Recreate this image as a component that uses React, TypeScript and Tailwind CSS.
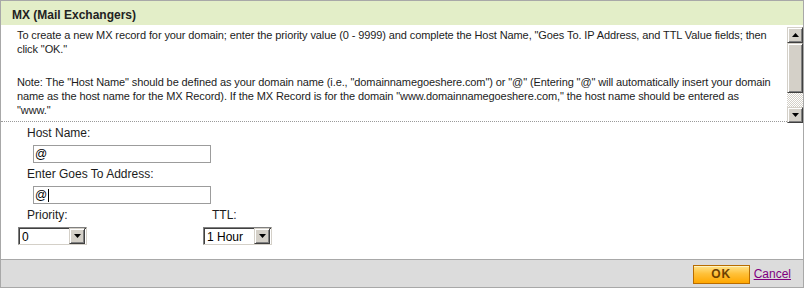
import React from "react";

const Triangle = () => (
  <svg width="7" height="4" viewBox="0 0 7 4">
    <polygon points="0,0 7,0 3.5,4" fill="#000" />
  </svg>
);

const TriangleUp = () => (
  <svg width="7" height="4" viewBox="0 0 7 4">
    <polygon points="0,4 7,4 3.5,0" fill="#000" />
  </svg>
);

// classic raised 3d button look
const raised =
  "bg-[#d4d0c8] border border-t-[#d4d0c8] border-l-[#d4d0c8] border-r-[#404040] border-b-[#404040] shadow-[inset_1px_1px_0_#fff,inset_-1px_-1px_0_#808080]";

const SelectBox = ({ value }: { value: string }) => (
  <div className="flex h-[18px] w-[69px] items-center border border-t-[#808080] border-l-[#808080] border-r-[#d4d0c8] border-b-[#d4d0c8] bg-white shadow-[inset_1px_1px_0_#404040]">
    <span className="flex-1 pl-[3px] pt-[1px] text-[12px] leading-[14px] text-black">{value}</span>
    <div className={`${raised} mr-[1px] flex h-[16px] w-[16px] items-center justify-center`}>
      <Triangle />
    </div>
  </div>
);

const App = () => {
  return (
    <div className="h-[289px] w-[808px] bg-white font-['Liberation_Sans',Arial,sans-serif]">
      <div className="flex h-[288px] w-[804px] flex-col border border-[#a8a8a8]">
        {/* HEADER */}
        <div className="h-[24px] bg-[#e3eec8] pl-[11px] text-[12px] font-bold leading-[28px] text-[#222]">
          MX (Mail Exchangers)
        </div>

        {/* DESCRIPTION + SCROLLBAR */}
        <div className="flex h-[98px]">
          <div className="h-[97px] w-[786px] overflow-hidden whitespace-nowrap border-b border-dotted border-[#9a9a9a] pl-[16px] pt-[3px] text-[11px] leading-[14px] tracking-[-0.1px] text-[#1c1c1c]">
            <p className="mb-[19px]">
              To create a new MX record for your domain; enter the priority value (0 - 9999) and complete the Host Name, "Goes To. IP Address, and TTL Value fields; then
              <br />
              click "OK."
            </p>
            <p>
              Note: The "Host Name" should be defined as your domain name (i.e., "domainnamegoeshere.com") or "@" (Entering "@" will automatically insert your domain
              <br />
              name as the host name for the MX Record). If the MX Record is for the domain "www.domainnamegoeshere.com," the host name should be entered as
              <br />
              "www."
            </p>
          </div>
          <div className="mt-[2px] flex h-[96px] w-[16px] flex-col">
            <div className={`${raised} flex h-[16px] w-[16px] items-center justify-center`}>
              <TriangleUp />
            </div>
            <div className={`${raised} h-[50px] w-[16px]`} />
            <div className="flex-1 bg-[repeating-conic-gradient(#d4d0c8_0_25%,#ffffff_0_50%)] bg-size-[2px_2px]" />
            <div className={`${raised} flex h-[16px] w-[16px] items-center justify-center`}>
              <Triangle />
            </div>
          </div>
        </div>

        {/* FORM */}
        <div className="flex flex-1 flex-col text-[12px] leading-[14px] text-[#1c1c1c]">
          <div className="ml-[26px] mt-[3px]">Host Name:</div>
          <div className="ml-[32px] mt-[5px] flex h-[18px] w-[178px] items-center border border-[#9c9c9c] pl-[1px] text-black">
            @
          </div>
          <div className="ml-[26px] mt-[4px]">Enter Goes To Address:</div>
          <div className="ml-[32px] mt-[5px] flex h-[18px] w-[178px] items-center border border-[#9c9c9c] pl-[1px] text-black">
            @<span className="ml-[1px] h-[13px] w-[1px] bg-black" />
          </div>
          <div className="mt-[4px] grid grid-cols-[185px_185px] pl-[17px]">
            <div>
              <div className="pl-[9px]">Priority:</div>
              <div className="mt-[5px]">
                <SelectBox value="0" />
              </div>
            </div>
            <div>
              <div className="pl-[9px]">TTL:</div>
              <div className="mt-[5px]">
                <SelectBox value="1 Hour" />
              </div>
            </div>
          </div>
        </div>

        {/* FOOTER */}
        <div className="flex h-[28px] items-center justify-end gap-[4px] border-t border-[#a8a8a8] bg-[#dcdcdc] pr-[12px]">
          <button className="mt-[1px] h-[19px] w-[57px] border border-[#b86c00] bg-[linear-gradient(#ffe38a,#ffc13a_45%,#ffa700)] text-[12px] font-bold leading-[16px] tracking-[1px] text-[#6e4100] shadow-[inset_0_1px_0_#fff3c0]">
            OK
          </button>
          <a href="#" className="text-[12px] leading-[14px] text-[#800080] underline">
            Cancel
          </a>
        </div>
      </div>
    </div>
  );
};

export default App;
